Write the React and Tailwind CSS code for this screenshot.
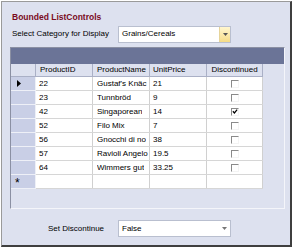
import React from "react";

const rows = [
  ["22", "Gustaf's Knäc", "21", false],
  ["23", "Tunnbröd", "9", false],
  ["42", "Singaporean", "14", true],
  ["52", "Filo Mix", "7", false],
  ["56", "Gnocchi di no", "38", false],
  ["57", "Ravioli Angelo", "19.5", false],
  ["64", "Wimmers gut", "33.25", false],
];

function Check({ checked }) {
  return (
    <div className="w-[8px] h-[8px] border-l border-t border-[#8a8a8a] border-r border-b border-r-[#f4f4f4] border-b-[#f4f4f4] bg-white flex items-center justify-center">
      {checked && (
        <svg width="7" height="7" viewBox="0 0 7 7">
          <path d="M1 3.2 L2.8 5.2 L6 1.2" stroke="#000" strokeWidth="1.4" fill="none" />
        </svg>
      )}
    </div>
  );
}

function Combo({ value, yellow }) {
  return (
    <div className="w-[113px] h-[17px] bg-white border border-[#b9bfcf] flex items-center">
      <div className="flex-1 pl-[3px] text-[8px] text-black truncate">{value}</div>
      {yellow ? (
        <div className="w-[11px] h-full bg-gradient-to-b from-[#fff6cf] to-[#f6dc86] border-l border-[#e6d49a] flex items-center justify-center">
          <svg width="5" height="3" viewBox="0 0 5 3"><path d="M0 0 H5 L2.5 3 Z" fill="#555" /></svg>
        </div>
      ) : (
        <div className="w-[11px] h-full flex items-center justify-center">
          <svg width="5" height="3" viewBox="0 0 5 3"><path d="M0 0 H5 L2.5 3 Z" fill="#777" /></svg>
        </div>
      )}
    </div>
  );
}

export default function App() {
  const cellBase = "h-full border-r border-[#d0d0d0] flex items-center text-[8px] text-black";
  return (
    <div className="w-[294px] h-[248px] bg-white pl-[1px] pt-[1px]" style={{ fontFamily: '"Liberation Sans", Arial, sans-serif' }}>
      <div className="w-[291px] h-[246px] bg-[#dde1ef] border-l border-t border-[#9a9a9a] border-r-2 border-b-2 border-r-[#3f3f3f] border-b-[#3f3f3f] flex flex-col">
        <div className="pl-[10px] pt-[11px] h-[21px] text-[8.5px] font-bold text-[#7a0b1e] leading-none">Bounded ListControls</div>
        <div className="flex items-center h-[18px] mt-[2px]">
          <div className="pl-[10px] w-[116px] text-[8px] text-black">Select Category for Display</div>
          <Combo value="Grains/Cereals" yellow />
        </div>
        <div className="ml-[8px] mt-[4px] w-[275px] h-[162px] border-l border-t border-[#8b90a3] border-r border-b border-r-[#f4f5fa] border-b-[#f4f5fa] flex flex-col">
          <div className="h-[16px] bg-[#6b7497]" />
          <div className="flex h-[13px] bg-[#dde1ef]">
            <div className="w-[25px] h-full border-r border-b border-[#aab0c6]" />
            <div className="w-[57px] h-full border-r border-b border-[#aab0c6] pl-[4px] flex items-center text-[8px] text-black">ProductID</div>
            <div className="w-[57px] h-full border-r border-b border-[#aab0c6] pl-[4px] flex items-center text-[8px] text-black">ProductName</div>
            <div className="w-[57px] h-full border-r border-b border-[#aab0c6] pl-[3px] flex items-center text-[8px] text-black">UnitPrice</div>
            <div className="w-[56px] h-full border-r border-b border-[#aab0c6] flex items-center justify-center text-[8px] text-black">Discontinued</div>
          </div>
          {rows.map((r, i) => (
            <div key={i} className="flex h-[14px]">
              <div className="w-[25px] h-full bg-[#c9cfe6] border-r border-b border-[#eef0f7] flex items-center pl-[6px]">
                {i === 0 && (
                  <svg width="4" height="7" viewBox="0 0 4 7"><path d="M0 0 L4 3.5 L0 7 Z" fill="#000" /></svg>
                )}
              </div>
              <div className="flex h-full bg-white border-b border-[#d6d6d6]">
                <div className={`w-[57px] pl-[3px] ${cellBase}`}>{r[0]}</div>
                <div className={`w-[57px] pl-[4px] ${cellBase}`}><span className="truncate whitespace-nowrap">{r[1]}</span></div>
                <div className={`w-[57px] pl-[3px] ${cellBase}`}>{r[2]}</div>
                <div className={`w-[56px] justify-center ${cellBase}`}><Check checked={r[3]} /></div>
              </div>
            </div>
          ))}
          <div className="flex h-[14px]">
            <div className="w-[25px] h-full bg-[#c9cfe6] border-r border-b border-[#eef0f7] flex items-center pl-[4px] text-[12px] leading-none text-black pt-[3px]">*</div>
            <div className="flex h-full bg-white border-b border-[#d6d6d6]">
              <div className={`w-[57px] ${cellBase}`} />
              <div className={`w-[57px] ${cellBase}`} />
              <div className={`w-[57px] ${cellBase}`} />
              <div className={`w-[56px] ${cellBase}`} />
            </div>
          </div>
        </div>
        <div className="flex items-center h-[17px] mt-[11px]">
          <div className="pl-[46px] w-[116px] text-[8px] text-black">Set Discontinue</div>
          <Combo value="False" />
        </div>
      </div>
    </div>
  );
}
